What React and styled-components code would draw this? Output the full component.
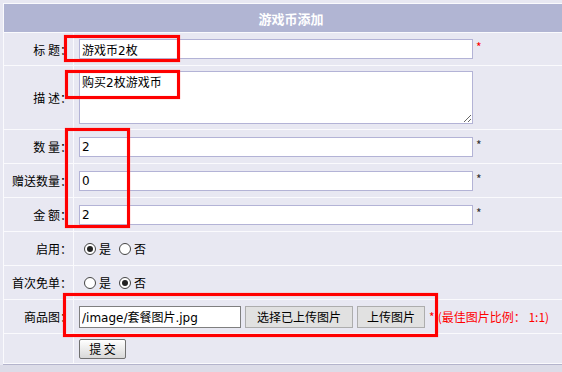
import React from 'react'
import styled, { createGlobalStyle } from 'styled-components'

const Global = createGlobalStyle`
  html, body {
    margin: 0;
    overflow: hidden;
    background: #dcdce8;
    font-family: "Noto Sans CJK SC", "DejaVu Sans", sans-serif;
    font-size: 12px;
    color: #000;
  }
`

const Frame = styled.div`
  position: relative;
  background: #e8e8f2;
  padding: 3px 0 0 3px;
`

const Sheet = styled.div`
  border-left: 1px solid #b4b4cc;
  border-bottom: 1px solid #b4b4cc;
`

const Table = styled.table`
  width: 576px;
  border-collapse: separate;
  border-spacing: 1px;
  background: #fafafd;
  margin-left: -1px;
`

const HeaderCell = styled.th`
  height: 28px;
  padding: 0;
  background: #b1b5d3;
  color: #fff;
  font-size: 13px;
  font-weight: bold;
  text-align: center;
`

const LabelCell = styled.td`
  width: 68px;
  height: ${({ $h }) => $h || 33}px;
  padding: 0 1px 0 0;
  background: #e8e8f2;
  text-align: right;
  white-space: nowrap;
  vertical-align: middle;
`

const FieldCell = styled.td`
  padding: 0 0 0 5px;
  background: #e8e8f2;
  vertical-align: middle;
  white-space: nowrap;
`

const Field = styled.div`
  display: flex;
  align-items: center;
  gap: ${({ $gap }) => $gap || 3}px;
`

const TextInput = styled.input`
  box-sizing: border-box;
  width: ${({ $w }) => $w || 394}px;
  height: ${({ $h }) => $h || 20}px;
  margin: 0;
  padding: 0 2px;
  border: 1px solid ${({ $plain }) => ($plain ? '#7f7f7f' : '#b3b3d6')};
  background: #fff;
  font-family: "DejaVu Sans", "Noto Sans CJK SC", sans-serif;
  font-size: 12px;
  color: #000;
  outline: none;
`

const TextArea = styled.textarea`
  box-sizing: border-box;
  width: 394px;
  height: 53px;
  margin: 0;
  padding: 1px 2px;
  border: 1px solid #b3b3d6;
  background: #fff;
  font-family: "DejaVu Sans", "Noto Sans CJK SC", sans-serif;
  font-size: 12px;
  color: #000;
  outline: none;
`

const Required = styled.span`
  color: ${({ $dark }) => ($dark ? '#333' : '#f00')};
  font-size: 12px;
  line-height: 12px;
  margin-top: -4px;
`

const Choices = styled.div`
  display: flex;
  align-items: center;
  padding-left: 5px;
`

const Choice = styled.label`
  display: flex;
  align-items: center;
  gap: 3px;
  margin-right: 8px;
`

const Radio = styled.span`
  box-sizing: border-box;
  width: 12px;
  height: 12px;
  border-radius: 50%;
  border: 1px solid #444;
  background: #fff;
  display: flex;
  align-items: center;
  justify-content: center;
  &::after {
    content: '';
    width: 6px;
    height: 6px;
    border-radius: 50%;
    background: ${({ $checked }) => ($checked ? '#222' : 'transparent')};
  }
`

const Button = styled.button`
  box-sizing: border-box;
  height: 22px;
  margin: 0;
  padding: 0 ${({ $pad }) => $pad || 10}px;
  border: 1px solid #adadad;
  background: #e1e1e1;
  font-family: "Noto Sans CJK SC", sans-serif;
  font-size: 12px;
  color: #000;
`

const SubmitButton = styled.button`
  box-sizing: border-box;
  width: 47px;
  height: 20px;
  margin: 0;
  padding: 0;
  border: 1px solid #707070;
  border-radius: 2px;
  background: linear-gradient(#ffffff, #d8d8d8);
  font-family: "Noto Sans CJK SC", sans-serif;
  font-size: 12px;
  color: #000;
`

const Note = styled.span`
  color: #f00;
  font-size: 12px;
`

const NoteText = styled.span`
  margin-left: 3px;
`

const Highlight = styled.div`
  position: absolute;
  box-sizing: border-box;
  left: ${({ $x }) => $x}px;
  top: ${({ $y }) => $y}px;
  width: ${({ $w }) => $w}px;
  height: ${({ $h }) => $h}px;
  border: 3px solid #ff0000;
  box-shadow: 0 0 1px #ff7070, inset 0 0 1px #ff7070;
  pointer-events: none;
`

const TextRow = ({ label, value, h, dark }) => (
  <tr>
    <LabelCell $h={h}>{label}</LabelCell>
    <FieldCell>
      <Field>
        <TextInput defaultValue={value} />
        <Required $dark={dark}>*</Required>
      </Field>
    </FieldCell>
  </tr>
)

const RadioRow = ({ label, yes }) => (
  <tr>
    <LabelCell>{label}</LabelCell>
    <FieldCell>
      <Choices>
        <Choice><Radio $checked={yes} />是</Choice>
        <Choice><Radio $checked={!yes} />否</Choice>
      </Choices>
    </FieldCell>
  </tr>
)

export default function App() {
  return (
    <Frame>
      <Global />
      <Sheet>
        <Table>
          <tbody>
            <tr>
              <HeaderCell colSpan={2}>游戏币添加</HeaderCell>
            </tr>
            <TextRow label="标 题：" value="游戏币2枚" h={32} />
            <tr>
              <LabelCell $h={63}>描 述：</LabelCell>
              <FieldCell>
                <Field>
                  <TextArea defaultValue="购买2枚游戏币" />
                </Field>
              </FieldCell>
            </tr>
            <TextRow label="数 量：" value="2" dark />
            <TextRow label="赠送数量：" value="0" dark />
            <TextRow label="金 额：" value="2" dark />
            <RadioRow label="启用：" yes />
            <RadioRow label="首次免单：" yes={false} />
            <tr>
              <LabelCell>商品图：</LabelCell>
              <FieldCell>
                <Field $gap={4}>
                  <TextInput $plain $w={162} $h={22} defaultValue="/image/套餐图片.jpg" />
                  <Button $pad={11}>选择已上传图片</Button>
                  <Button $pad={9}>上传图片</Button>
                  <Note>*<NoteText>(最佳图片比例： 1:1)</NoteText></Note>
                </Field>
              </FieldCell>
            </tr>
            <tr>
              <LabelCell $h={29} />
              <FieldCell>
                <SubmitButton>提 交</SubmitButton>
              </FieldCell>
            </tr>
          </tbody>
        </Table>
      </Sheet>
      <Highlight $x={64} $y={35} $w={116} $h={27} />
      <Highlight $x={65} $y={70} $w={115} $h={29} />
      <Highlight $x={65} $y={128} $w={65} $h={100} />
      <Highlight $x={63} $y={293} $w={375} $h={44} />
    </Frame>
  )
}
